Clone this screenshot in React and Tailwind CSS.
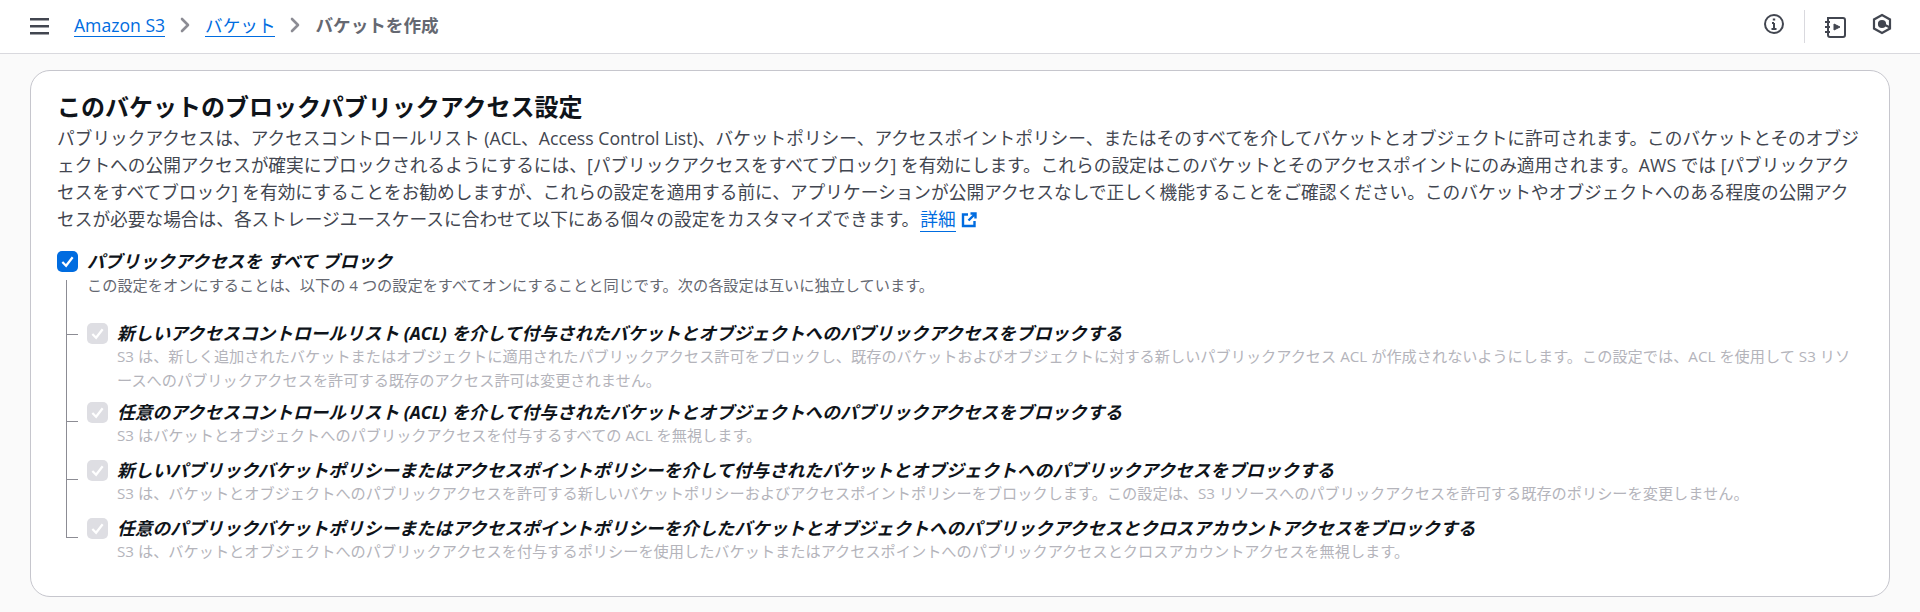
import { ChevronRight } from "lucide-react";

const font = { fontFamily: '"Open Sans", "Noto Sans CJK JP", sans-serif' };

const options = [
  {
    title: "新しいアクセスコントロールリスト (ACL) を介して付与されたバケットとオブジェクトへのパブリックアクセスをブロックする",
    desc: "S3 は、新しく追加されたバケットまたはオブジェクトに適用されたパブリックアクセス許可をブロックし、既存のバケットおよびオブジェクトに対する新しいパブリックアクセス ACL が作成されないようにします。この設定では、ACL を使用して S3 リソースへのパブリックアクセスを許可する既存のアクセス許可は変更されません。",
    branch: "top-[11px]",
    gap: "mb-[10px]",
  },
  {
    title: "任意のアクセスコントロールリスト (ACL) を介して付与されたバケットとオブジェクトへのパブリックアクセスをブロックする",
    desc: "S3 はバケットとオブジェクトへのパブリックアクセスを付与するすべての ACL を無視します。",
    branch: "top-[19px]",
    gap: "mb-[13px]",
  },
  {
    title: "新しいパブリックバケットポリシーまたはアクセスポイントポリシーを介して付与されたバケットとオブジェクトへのパブリックアクセスをブロックする",
    desc: "S3 は、バケットとオブジェクトへのパブリックアクセスを許可する新しいバケットポリシーおよびアクセスポイントポリシーをブロックします。この設定は、S3 リソースへのパブリックアクセスを許可する既存のポリシーを変更しません。",
    branch: "top-[19px]",
    gap: "mb-[13px]",
  },
  {
    title: "任意のパブリックバケットポリシーまたはアクセスポイントポリシーを介したバケットとオブジェクトへのパブリックアクセスとクロスアカウントアクセスをブロックする",
    desc: "S3 は、バケットとオブジェクトへのパブリックアクセスを付与するポリシーを使用したバケットまたはアクセスポイントへのパブリックアクセスとクロスアカウントアクセスを無視します。",
    branch: "top-[19px]",
    gap: "",
  },
];

function Check({ disabled }) {
  return (
    <span className={`flex h-[21px] w-[21px] shrink-0 items-center justify-center rounded-[5px] ${disabled ? "bg-[#dedee3]" : "bg-[#006ce0]"}`}>
      <svg width="15" height="15" viewBox="0 0 16 16" fill="none" stroke="white" strokeWidth="2.4">
        <path d="M2.5 8.5 6.5 12.5 13.5 3.5" />
      </svg>
    </span>
  );
}

export default function App() {
  return (
    <div className="h-[612px] overflow-hidden bg-[#fafafa] text-[#0f141a]" style={font}>
      <header className="flex h-[54px] items-center border-b border-[#d9d9de] bg-white pl-[30px] pr-[28px]">
        <svg width="19" height="17" viewBox="0 0 19 17" fill="#424650">
          <rect width="19" height="2.500" y="0" />
          <rect width="19" height="2.500" y="7" />
          <rect width="19" height="2.500" y="14" />
        </svg>
        <nav className="mb-[2px] ml-[25px] flex items-center text-[17.6px] text-[#656871]">
          <a className="border-b border-[#006ce0] leading-[22px] text-[#006ce0]">Amazon S3</a>
          <ChevronRight size={24} strokeWidth={2.6} className="mx-[8px] text-[#8c8c94]" />
          <a className="border-b border-[#006ce0] leading-[22px] text-[#006ce0]">バケット</a>
          <ChevronRight size={24} strokeWidth={2.6} className="mx-[8px] text-[#8c8c94]" />
          <span className="font-bold">バケットを作成</span>
        </nav>
        <div className="ml-auto flex items-center">
          <svg width="22" height="22" viewBox="0 0 22 22" fill="none" stroke="#424650" strokeWidth="2" className="mb-[5px]">
            <circle cx="11" cy="11" r="9" />
            <path d="M11 10v6M8.500 16h5M9 10h2" />
            <path d="M11 5.500v2" strokeWidth="2.400" />
          </svg>
          <span className="ml-[19px] mr-[19px] h-[33px] w-px bg-[#d9d9de]" />
          <svg width="22" height="22" viewBox="0 0 22 22" fill="none" stroke="#424650" strokeWidth="2" className="mt-[1px]">
            <path d="M4 2h15a2 2 0 0 1 2 2v15a2 2 0 0 1-2 2H6a2 2 0 0 1-2-2V2Z" />
            <path d="M1 6h5M1 11h5M1 16h5" />
            <path d="M10 8v6l6-3-6-3Z" fill="#424650" strokeWidth="1" />
          </svg>
          <svg width="20" height="22" viewBox="0 0 20 22" fill="none" stroke="#424650" strokeWidth="2.200" className="mb-[5px] ml-[26px]">
            <path d="M10 2 18 6.500v9L10 20l-8-4.500v-9L10 2Z" />
            <circle cx="10" cy="11" r="3" fill="#424650" />
            <path d="M11 11l7 3.500" />
          </svg>
        </div>
      </header>

      <main className="px-[30px] pt-[16px]">
        <section className="relative h-[527px] rounded-[20px] border border-[#c6c6cd] bg-white pl-[26px] pr-[30px] pt-[17px]">
          <h2 className="text-[24px] font-bold leading-[37px]">このバケットのブロックパブリックアクセス設定</h2>
          <p className="text-[17.700px] leading-[27px] text-[#424650]">
            パブリックアクセスは、アクセスコントロールリスト (ACL、Access Control List)、バケットポリシー、アクセスポイントポリシー、またはそのすべてを介してバケットとオブジェクトに許可されます。このバケットとそのオブジェクトへの公開アクセスが確実にブロックされるようにするには、[パブリックアクセスをすべてブロック] を有効にします。これらの設定はこのバケットとそのアクセスポイントにのみ適用されます。AWS では [パブリックアクセスをすべてブロック] を有効にすることをお勧めしますが、これらの設定を適用する前に、アプリケーションが公開アクセスなしで正しく機能することをご確認ください。このバケットやオブジェクトへのある程度の公開アクセスが必要な場合は、各ストレージユースケースに合わせて以下にある個々の設定をカスタマイズできます。
            <a className="ml-[1px] border-b border-[#006ce0] text-[#006ce0]">詳細</a>
            <svg width="16" height="16" viewBox="0 0 16 16" fill="none" stroke="#006ce0" strokeWidth="2.400" className="ml-[5px] inline align-[-2px]">
              <path d="M7 2.500H2v11.500h11.500V9M9.500 1.500h5v5M14 2 7.500 8.500" />
            </svg>
          </p>

          <div className="mt-[18px] flex gap-[9px]">
            <Check />
            <div>
              <div className="text-[17.600px] font-bold italic leading-[21px]">パブリックアクセスを すべて ブロック</div>
              <div className="text-[15.200px] leading-[26px] text-[#656871]">この設定をオンにすることは、以下の 4 つの設定をすべてオンにすることと同じです。次の各設定は互いに独立しています。</div>
            </div>
          </div>

          <div className="relative ml-[9px] pt-[25px]">
            {/* tree line joining the four sub options */}
            <span className="absolute left-0 top-[-18px] h-[257px] w-px bg-[#8c8c94]" />
            {options.map((o, i) => (
              <div key={i} className={`relative flex gap-[9px] pl-[21px] ${o.gap}`}>
                <span className={`absolute left-0 h-px w-[12px] bg-[#8c8c94] ${o.branch}`} />
                <Check disabled />
                <div>
                  <div className="text-[17.700px] font-bold italic leading-[21px]">{o.title}</div>
                  <div className="text-[15.200px] leading-[24px] text-[#b4b4bb]">{o.desc}</div>
                </div>
              </div>
            ))}
          </div>
        </section>
      </main>
    </div>
  );
}
